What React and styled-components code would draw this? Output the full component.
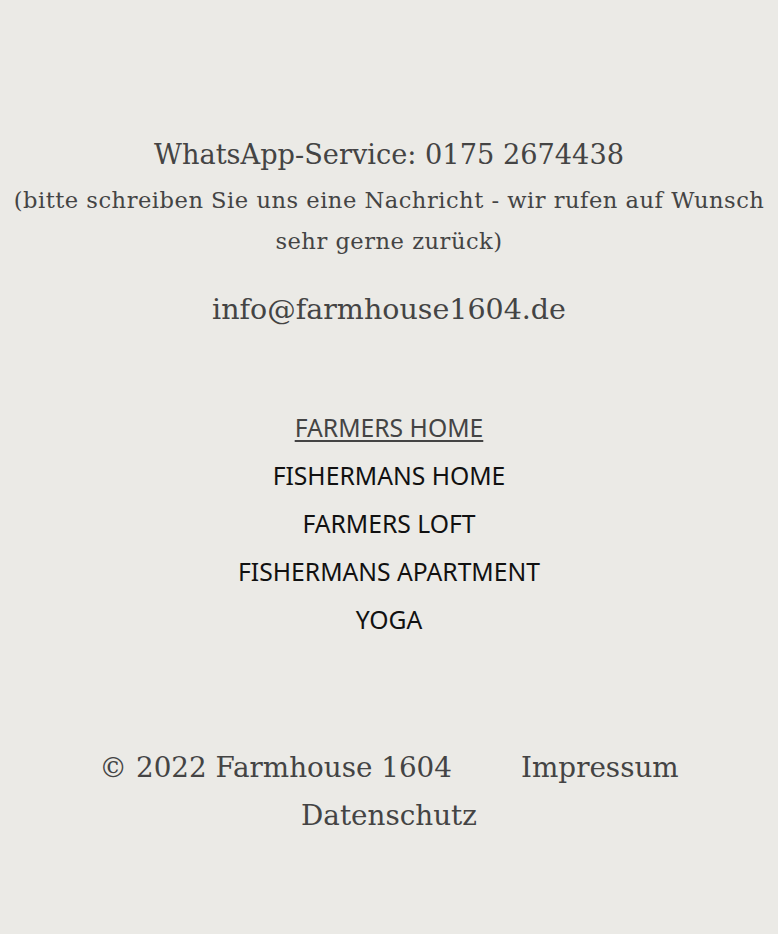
import styled, { createGlobalStyle } from "styled-components";

const GlobalStyle = createGlobalStyle`
  html, body {
    margin: 0;
    padding: 0;
    background: #ebeae6;
  }
`;

const Footer = styled.footer`
  width: 100%;
  min-height: 934px;
  background: #ebeae6;
  display: flex;
  flex-direction: column;
  align-items: center;
  padding-top: 137px;
  box-sizing: border-box;
  text-align: center;
  font-family: "DejaVu Serif", "Liberation Serif", serif;
  color: #444;
`;

const Contact = styled.div`
  display: flex;
  flex-direction: column;
  align-items: center;
`;

const Phone = styled.div`
  font-size: 27.2px;
  line-height: 36px;
`;

const Note = styled.div`
  font-size: 22.6px;
  letter-spacing: 0.5px;
  line-height: 41px;
  margin-top: 7px;
  padding: 0 4px;
`;

const Email = styled.div`
  font-size: 28.5px;
  line-height: 36px;
  margin-top: 30px;
`;

const Nav = styled.nav`
  display: flex;
  flex-direction: column;
  align-items: center;
  margin-top: 76px;
`;

const NavLink = styled.a`
  font-family: "Noto Sans", "Open Sans", sans-serif;
  font-size: 24.7px;
  line-height: 48px;
  color: ${(p) => (p.$active ? "#444" : "#111")};
  text-decoration: ${(p) => (p.$active ? "underline" : "none")};
  text-underline-offset: 3px;
  text-decoration-thickness: 2px;
`;

const Bottom = styled.div`
  display: flex;
  flex-wrap: wrap;
  justify-content: center;
  column-gap: 69px;
  margin-top: 100px;
  font-size: 27.8px;
  line-height: 48px;
`;

const BottomItem = styled.span``;

export default function App() {
  return (
    <>
      <GlobalStyle />
      <Footer>
        <Contact>
          <Phone>WhatsApp-Service: 0175 2674438</Phone>
          <Note>
            (bitte schreiben Sie uns eine Nachricht - wir rufen auf Wunsch sehr
            gerne zurück)
          </Note>
          <Email>info@farmhouse1604.de</Email>
        </Contact>
        <Nav>
          <NavLink $active>FARMERS HOME</NavLink>
          <NavLink>FISHERMANS HOME</NavLink>
          <NavLink>FARMERS LOFT</NavLink>
          <NavLink>FISHERMANS APARTMENT</NavLink>
          <NavLink>YOGA</NavLink>
        </Nav>
        <Bottom>
          <BottomItem>© 2022 Farmhouse 1604</BottomItem>
          <BottomItem>Impressum</BottomItem>
          <BottomItem>Datenschutz</BottomItem>
        </Bottom>
      </Footer>
    </>
  );
}
